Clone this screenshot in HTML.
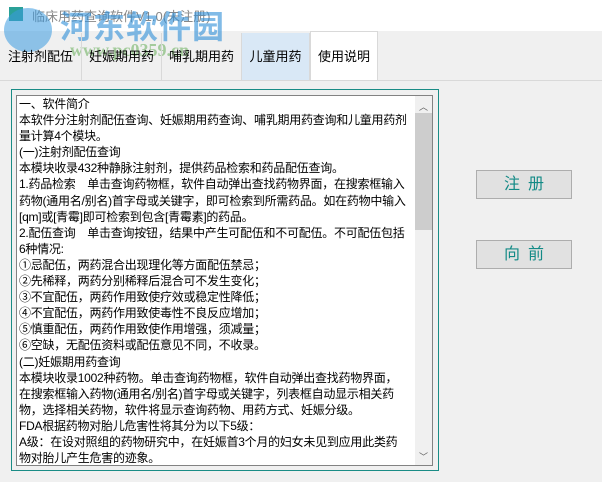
<!DOCTYPE html>
<html><head><meta charset="utf-8"><style>
body{margin:0;width:602px;height:482px;background:#f0f0f0;position:relative;overflow:hidden;font-family:"Liberation Sans","Noto Sans CJK SC",sans-serif;}
.title{position:absolute;left:0;top:0;width:602px;height:31px;background:#fff;}
.tabs{position:absolute;left:0;top:33px;height:47px;width:602px;border-bottom:1px solid #d9d9d9;}
.tab{position:absolute;top:0;height:47px;line-height:47px;text-align:center;font-size:13px;color:#000;border-right:1px solid #d9d9d9;box-sizing:border-box;}
.panel{position:absolute;left:11px;top:89px;width:426px;height:380px;border:1px solid #1a8c86;}
.box{position:absolute;left:16px;top:95px;width:415px;height:369px;border:1px solid #828282;background:#fff;overflow:hidden;}
.txt{position:absolute;left:2px;top:0;width:394px;font-size:12px;letter-spacing:-0.25px;line-height:16.1px;color:#000;white-space:nowrap;}
.sb{position:absolute;right:0;top:0;width:17px;height:369px;background:#f0f0f0;}
.btn{position:absolute;left:476px;width:96px;height:29px;border:1px solid #adadad;background:#e1e1e1;color:#138a86;font-size:16px;text-align:center;line-height:28px;letter-spacing:8px;text-indent:8px;box-sizing:border-box;}
</style></head><body>
<div class="title">
<div style="position:absolute;left:9px;top:7px;width:14px;height:14px;background:#2aa198;"></div>
<div style="position:absolute;left:32px;top:6px;font-size:13px;color:#888;">临床用药查询软件V1.0(未注册)</div>
<div style="position:absolute;left:60px;top:2px;font-size:32px;font-weight:bold;color:#2f8fd8;opacity:.6;letter-spacing:1px;">河东软件园</div>
<div style="position:absolute;left:4px;top:8px;width:48px;height:44px;border-radius:50%;background:#3b9ae0;opacity:.55;"></div>
</div>
<div style="position:absolute;left:70px;top:40px;font-size:18px;font-weight:bold;color:#5aa84a;opacity:.5;font-family:'Liberation Serif',serif;">www.pc0359.cn</div>
<div class="tabs">
<div class="tab" style="left:0;width:82px;">注射剂配伍</div>
<div class="tab" style="left:82px;width:80px;">妊娠期用药</div>
<div class="tab" style="left:162px;width:80px;">哺乳期用药</div>
<div class="tab" style="left:242px;width:68px;background:#d9e8f6;">儿童用药</div>
<div class="tab" style="left:310px;width:68px;top:-2px;height:50px;background:#fff;border:1px solid #d9d9d9;line-height:50px;">使用说明</div>
</div>
<div class="panel"></div>
<div class="box">
<div class="txt">一、软件简介<br>本软件分注射剂配伍查询、妊娠期用药查询、哺乳期用药查询和儿童用药剂<br>量计算4个模块。<br>(一)注射剂配伍查询<br>本模块收录432种静脉注射剂，提供药品检索和药品配伍查询。<br>1.药品检索　单击查询药物框，软件自动弹出查找药物界面，在搜索框输入<br>药物(通用名/别名)首字母或关键字，即可检索到所需药品。如在药物中输入<br>[qm]或[青霉]即可检索到包含[青霉素]的药品。<br>2.配伍查询　单击查询按钮，结果中产生可配伍和不可配伍。不可配伍包括<br>6种情况:<br>①忌配伍，两药混合出现理化等方面配伍禁忌；<br>②先稀释，两药分别稀释后混合可不发生变化；<br>③不宜配伍，两药作用致使疗效或稳定性降低；<br>④不宜配伍，两药作用致使毒性不良反应增加；<br>⑤慎重配伍，两药作用致使作用增强，须减量；<br>⑥空缺，无配伍资料或配伍意见不同，不收录。<br>(二)妊娠期用药查询<br>本模块收录1002种药物。单击查询药物框，软件自动弹出查找药物界面，<br>在搜索框输入药物(通用名/别名)首字母或关键字，列表框自动显示相关药<br>物，选择相关药物，软件将显示查询药物、用药方式、妊娠分级。<br>FDA根据药物对胎儿危害性将其分为以下5级：<br>A级：在设对照组的药物研究中，在妊娠首3个月的妇女未见到应用此类药<br>物对胎儿产生危害的迹象。<br>B级：在动物繁殖研究中，未见到此类药物对胎儿不良影响。</div>
<div class="sb">
<div style="position:absolute;left:4px;top:4px;font-size:9px;color:#606060;">︿</div>
<div style="position:absolute;left:0;top:17px;width:17px;height:117px;background:#cdcdcd;"></div>
<div style="position:absolute;left:4px;top:354px;font-size:9px;color:#606060;">﹀</div>
</div>
</div>
<div class="btn" style="top:170px;">注册</div>
<div class="btn" style="top:240px;">向前</div>
</body></html>
